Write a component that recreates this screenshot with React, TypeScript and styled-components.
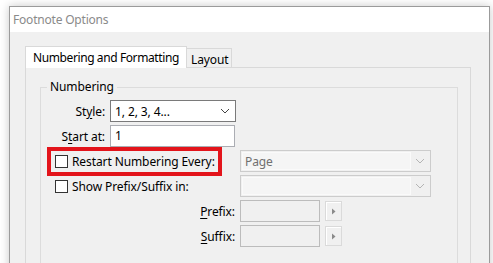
import styled, { createGlobalStyle } from 'styled-components';

const GlobalStyle = createGlobalStyle`
  html, body {
    margin: 0;
    padding: 0;
    background: #ffffff;
    overflow: hidden;
  }
  body {
    font-family: 'Noto Sans', 'Open Sans', sans-serif;
    font-size: 12px;
    letter-spacing: -0.1px;
    color: #000;
  }
`;

const Chevron = ({ disabled }: { disabled?: boolean }) => (
  <svg width="10" height="6" viewBox="0 0 10 6">
    <path
      d="M1 1 L5 5 L9 1"
      fill="none"
      stroke={disabled ? '#b4b4b4' : '#444'}
      strokeWidth="1"
    />
  </svg>
);

const RightArrow = () => (
  <svg width="5" height="7" viewBox="0 0 5 7">
    <path d="M1 0.5 L4.5 3.5 L1 6.5 Z" fill="#8a8a8a" />
  </svg>
);

export default function App() {
  return (
    <>
      <GlobalStyle />
      <Page>
        <Window>
          <TitleBar>Footnote Options</TitleBar>
          <Body>
            <TabStrip>
              <Tab active>Numbering and Formatting</Tab>
              <Tab>Layout</Tab>
            </TabStrip>
            <Panel>
              <Group>
                <legend>Numbering</legend>
                <Rows>
                  <Row>
                    <Label width={50}>
                      St<u>y</u>le:
                    </Label>
                    <Select width={126}>
                      <SelectValue>1, 2, 3, 4...</SelectValue>
                      <Chevron />
                    </Select>
                  </Row>
                  <Row>
                    <Label width={50}>
                      S<u>t</u>art at:
                    </Label>
                    <TextField width={125}>1</TextField>
                  </Row>
                  <Row>
                    <CheckOption highlight>
                      <CheckBox />
                      Restart Numbering Every:
                    </CheckOption>
                    <DisabledSelect width={191}>
                      <DisabledValue>Page</DisabledValue>
                      <ArrowArea>
                        <Chevron disabled />
                      </ArrowArea>
                    </DisabledSelect>
                  </Row>
                  <Row>
                    <CheckOption>
                      <CheckBox />
                      Show Prefix/Suffix in:
                    </CheckOption>
                    <DisabledSelect width={191}>
                      <DisabledValue />
                      <ArrowArea>
                        <Chevron disabled />
                      </ArrowArea>
                    </DisabledSelect>
                  </Row>
                  <Row>
                    <Label width={180}>
                      <u>P</u>refix:
                    </Label>
                    <DisabledField />
                    <ArrowButton>
                      <RightArrow />
                    </ArrowButton>
                  </Row>
                  <Row>
                    <Label width={180}>
                      <u>S</u>uffix:
                    </Label>
                    <DisabledField />
                    <ArrowButton>
                      <RightArrow />
                    </ArrowButton>
                  </Row>
                </Rows>
              </Group>
            </Panel>
          </Body>
        </Window>
      </Page>
    </>
  );
}

const Page = styled.div`
  width: 493px;
  height: 263px;
  padding: 6px 0 0 9px;
  box-sizing: border-box;
  overflow: hidden;
`;

const Window = styled.div`
  width: 481px;
  height: 320px;
  box-sizing: border-box;
  border: 1px solid #9b9b9b;
  background: #f0f0f0;
  box-shadow: 0 0 9px rgba(0, 0, 0, 0.22);
  display: flex;
  flex-direction: column;
`;

const TitleBar = styled.div`
  height: 25px;
  background: #ffffff;
  color: #8a8a8a;
  padding-left: 3px;
  line-height: 25px;
  letter-spacing: -0.2px;
`;

const Body = styled.div`
  flex: 1;
  padding: 15px 18px 0 15px;
  display: flex;
  flex-direction: column;
`;

const TabStrip = styled.div`
  display: flex;
  align-items: flex-end;
  height: 21px;
  position: relative;
  z-index: 1;
  margin-bottom: -1px;
`;

const Tab = styled.div<{ active?: boolean }>`
  box-sizing: border-box;
  height: ${({ active }) => (active ? '22px' : '20px')};
  padding: ${({ active }) => (active ? '3px 0 0 7px' : '3px 0 0 4px')};
  width: ${({ active }) => (active ? '162px' : '46px')};
  margin-left: ${({ active }) => (active ? '0' : '-1px')};
  border: 1px solid #d9d9d9;
  border-bottom: ${({ active }) => (active ? 'none' : '1px solid #d9d9d9')};
  background: ${({ active }) => (active ? '#ffffff' : '#f0f0f0')};
  line-height: 15px;
  letter-spacing: ${({ active }) => (active ? '-0.4px' : '-0.1px')};
  white-space: nowrap;
  overflow: hidden;
  position: relative;
  z-index: ${({ active }) => (active ? 2 : 1)};
`;

const Panel = styled.div`
  width: 446px;
  flex: 1;
  box-sizing: border-box;
  border: 1px solid #d9d9d9;
  padding: 0 12px 0 14px;
`;

const Group = styled.fieldset`
  width: 418px;
  height: 260px;
  box-sizing: border-box;
  margin: 11px 0 0 0;
  padding: 0;
  border: 1px solid #dcdcdc;

  legend {
    margin-left: 6px;
    padding: 0 3px;
    line-height: 16px;
  }
`;

const Rows = styled.div`
  display: flex;
  flex-direction: column;
  gap: 3px;
  margin-top: 5px;
  padding-left: 14px;
`;

const Row = styled.div`
  display: flex;
  align-items: center;
  gap: 5px;
  height: 22px;
  white-space: nowrap;
`;

const Label = styled.div<{ width: number }>`
  width: ${({ width }) => width}px;
  text-align: right;

  u {
    text-decoration-thickness: 1px;
    text-underline-offset: 2px;
  }
`;

const Select = styled.div<{ width: number }>`
  width: ${({ width }) => width}px;
  height: 22px;
  box-sizing: border-box;
  border: 1px solid #7a7a7a;
  background: #ffffff;
  display: flex;
  align-items: center;
  padding: 0 5px 0 4px;
`;

const SelectValue = styled.span`
  flex: 1;
`;

const TextField = styled.div<{ width: number }>`
  width: ${({ width }) => width}px;
  height: 22px;
  box-sizing: border-box;
  border: 1px solid #abadb3;
  background: #ffffff;
  padding-left: 4px;
  line-height: 20px;
`;

const CheckOption = styled.label<{ highlight?: boolean }>`
  width: 180px;
  height: 22px;
  display: flex;
  align-items: center;
  gap: 4px;
  position: relative;

  &::after {
    content: '';
    display: ${({ highlight }) => (highlight ? 'block' : 'none')};
    position: absolute;
    left: -8px;
    top: -3px;
    width: 175px;
    height: 29px;
    box-sizing: border-box;
    border: 4px solid #e3141b;
  }
`;

const CheckBox = styled.span`
  width: 13px;
  height: 13px;
  box-sizing: border-box;
  border: 1px solid #333333;
  background: #ffffff;
  flex-shrink: 0;
`;

const DisabledSelect = styled.div<{ width: number }>`
  width: ${({ width }) => width}px;
  height: 22px;
  box-sizing: border-box;
  border: 1px solid #cccccc;
  background: #f0f0f0;
  padding: 1px;
  display: flex;
`;

const DisabledValue = styled.div`
  flex: 1;
  box-sizing: border-box;
  border: 1px solid #fafafa;
  background: #f5f5f5;
  color: #707070;
  padding-left: 2px;
  line-height: 17px;
`;

const ArrowArea = styled.div`
  width: 18px;
  display: flex;
  align-items: center;
  justify-content: center;
`;

const DisabledField = styled.div`
  width: 80px;
  height: 22px;
  box-sizing: border-box;
  border: 1px solid #bcbcbc;
  background: #f0f0f0;
`;

const ArrowButton = styled.div`
  width: 17px;
  height: 20px;
  box-sizing: border-box;
  border: 1px solid #dadada;
  box-shadow: inset 1px 1px 0 #ffffff;
  background: #f0f0f0;
  display: flex;
  align-items: center;
  justify-content: center;
`;
